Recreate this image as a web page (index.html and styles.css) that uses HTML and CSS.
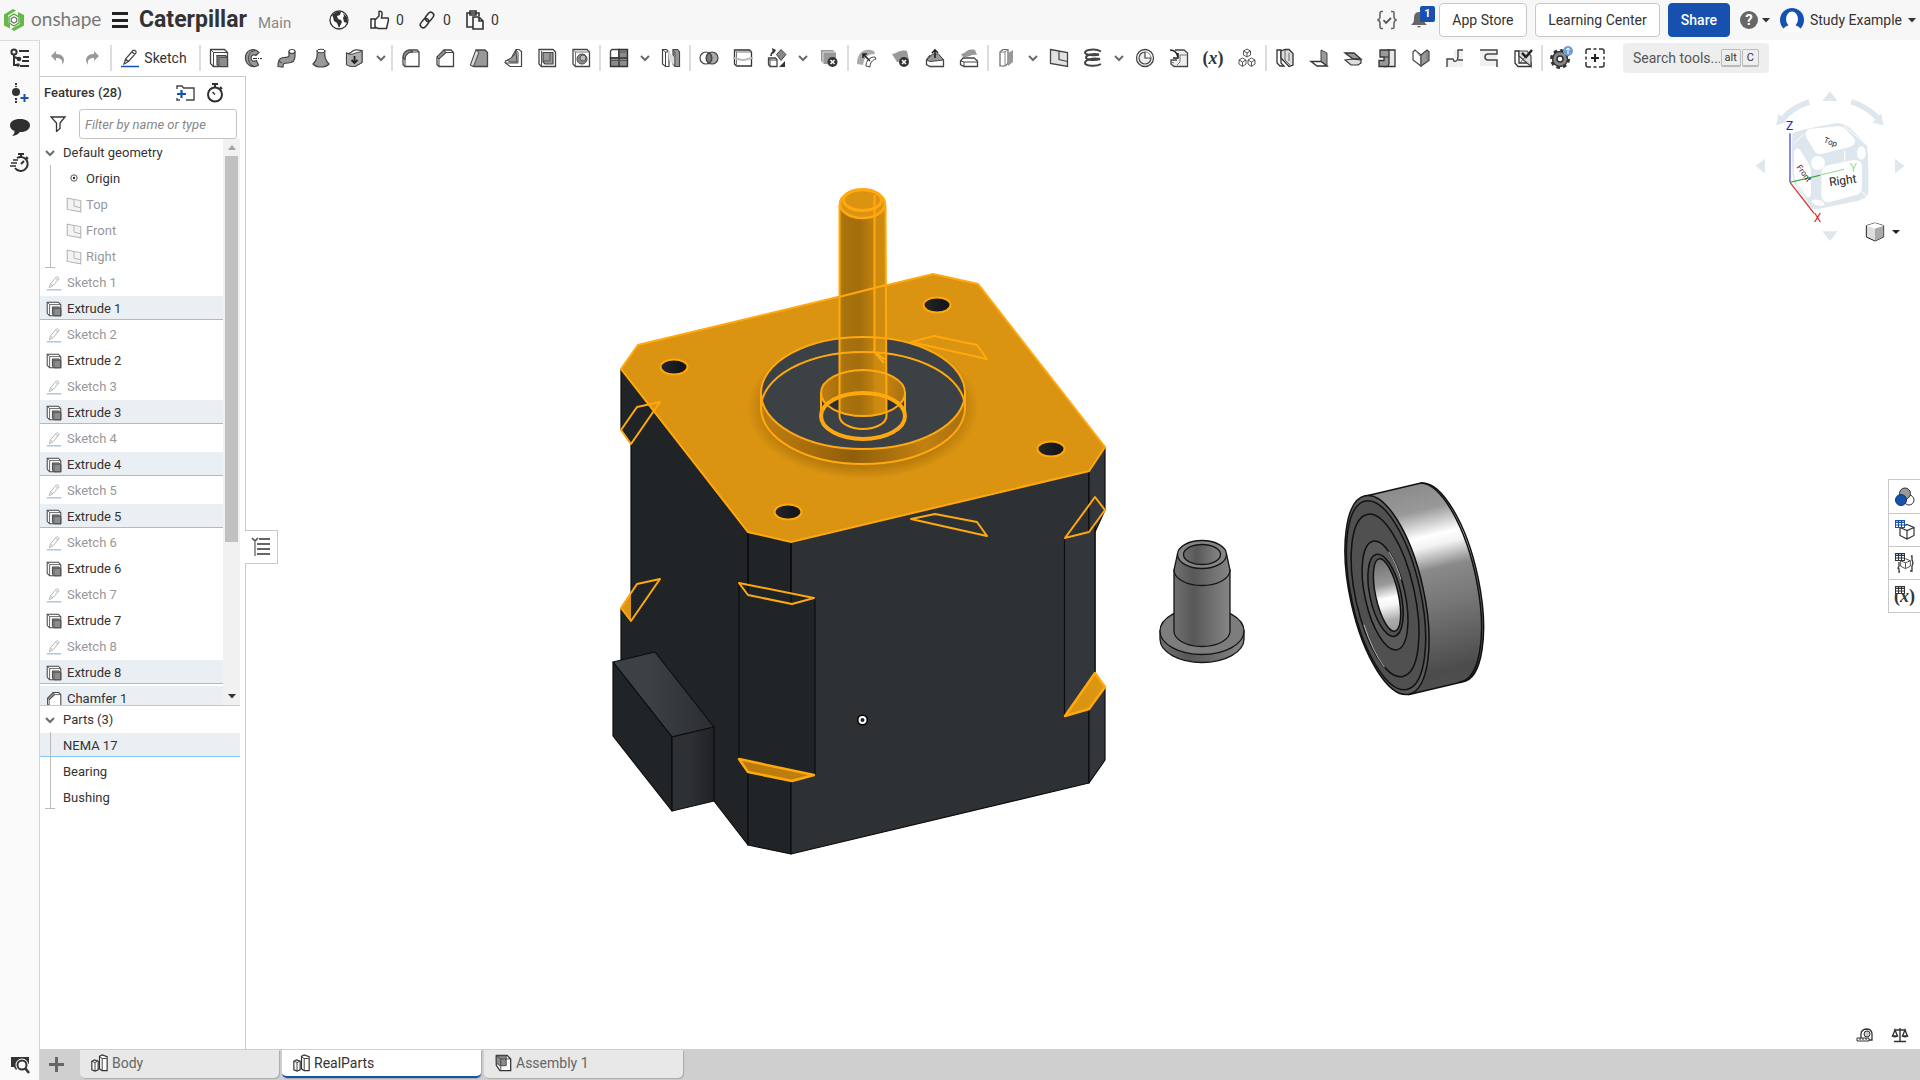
FILE: index.html
```html
<!DOCTYPE html>
<html lang="en">
<head>
<meta charset="utf-8">
<title>Caterpillar | RealParts</title>
<link rel="stylesheet" href="styles.css">
</head>
<body>
<svg class="defs" aria-hidden="true">
  <symbol id="i-chev" viewBox="0 0 10 10"><path d="M1 3l4 4 4-4" fill="none" stroke="#6b6b6b" stroke-width="2"/></symbol>
  <symbol id="i-caret" viewBox="0 0 8 5"><path d="M0 0h8L4 4.500z" fill="#333"/></symbol>
  <symbol id="i-undo" viewBox="0 0 20 20"><path d="M8 3L3 8l5 5v-3c5 0 7 2 6 7 4-5 2-11-6-11z" fill="#999"/></symbol>
  <symbol id="i-redo" viewBox="0 0 20 20"><path d="M12 3l5 5-5 5v-3c-5 0-7 2-6 7-4-5-2-11 6-11z" fill="#999"/></symbol>
  <symbol id="i-sketch" viewBox="0 0 20 20"><path d="M4 16l1.500-5L13 2.500c1-1 4 1 3 2.500L8.500 13.500zM5.500 11l3 2.500M12 4l3 2.500" fill="#fff" stroke="#444" stroke-width="1.200"/><path d="M1 18.500h18" stroke="#1651b0" stroke-width="1.500"/></symbol>
  <symbol id="i-extrude" viewBox="0 0 20 20"><path d="M1.500 1.500h14l3 3v14h-14l-3-3z" fill="#fff" stroke="#444" stroke-width="1.300"/><path d="M1.500 1.500l3 3h14M4.500 4.500v14" fill="none" stroke="#444"/><path d="M8 7.500h8.500l2 2v9H10l-2-2z" fill="#8c8c8c" stroke="#444" stroke-width="1.200"/><path d="M8 7.500l2 2h8.500M10 9.500v9" fill="none" stroke="#555"/></symbol>
  <symbol id="i-revolve" viewBox="0 0 20 20"><path d="M16 4.500C11-1 2 2 2.500 10.500 3 18 11 20.500 15.500 17l-2-4.500c-2.500 1.500-5.500.5-5.500-2.500s3-4 5-2.500z" fill="#999" stroke="#444" stroke-width="1.200"/><path d="M12 2.500C7 3 5.500 7 5.500 10.500s2 6.500 5.500 8" fill="none" stroke="#444"/><path d="M10 10.500h9" stroke="#333" stroke-width="1.200" stroke-dasharray="4 1 1 1"/></symbol>
  <symbol id="i-sweep" viewBox="0 0 20 20"><path d="M12 4v3.500c0 2-2 2-5 2-5 0-6 3.500-6 9l5 .5c0-4 1-4 5-4 5 0 7-3 7-7V4z" fill="#999" stroke="#444" stroke-width="1.200"/><ellipse cx="15" cy="3.500" rx="3" ry="2" fill="#fff" stroke="#444" stroke-width="1.200"/><path d="M2 13l3 2" stroke="#444"/></symbol>
  <symbol id="i-loft" viewBox="0 0 20 20"><path d="M6 3c1 5 0 9-4 13 4 4 12 4 16 0-4-4-5-8-4-13z" fill="#999" stroke="#444" stroke-width="1.200"/><ellipse cx="10" cy="3" rx="4" ry="1.800" fill="#fff" stroke="#444"/></symbol>
  <symbol id="i-thicken" viewBox="0 0 20 20"><path d="M1.500 5c3 1 4 0 7-2.500 3-1.500 5 0 8.500 0v12L10 18.500c-3 0-5 0-8.500-2z" fill="#fff" stroke="#444" stroke-width="1.200"/><path d="M1.500 5c3 2 6 1.500 9 0 3-1 5-.5 6.500-2.500v12L10 18.500c-4 0-6 0-8.500-2z" fill="#b0b0b0" stroke="#444"/><path d="M9.500 8v6M6.500 12l3 3 3-3" stroke="#222" stroke-width="1.800" fill="none"/></symbol>
  <symbol id="i-fillet" viewBox="0 0 20 20"><path d="M4 18.500l-2-2V10c0-5 3-8 8-8h6l2 2v14.500z" fill="#fff" stroke="#444" stroke-width="1.300"/><path d="M2 10c0-5 3-8 8-8l2 2c-5 0-8 3-8 8z" fill="#8c8c8c" stroke="#444"/><path d="M4 18V12c0-5 3-8 8-8h6" fill="none" stroke="#444"/></symbol>
  <symbol id="i-chamfer" viewBox="0 0 20 20"><path d="M4 18.500l-2-2V9l7-7h7l2.500 2.500v14z" fill="#fff" stroke="#444" stroke-width="1.300"/><path d="M2 9l7-7 2 2.500L4 11z" fill="#8c8c8c" stroke="#444"/><path d="M4 18.500V11l7-6.500h7.500" fill="none" stroke="#444"/></symbol>
  <symbol id="i-draft" viewBox="0 0 20 20"><path d="M1.500 17L7 2h9l2.500 2.500v14h-14z" fill="#999" stroke="#444" stroke-width="1.300"/><path d="M4.500 18.500L10 4.500 7 2" fill="none" stroke="#555"/><path d="M2 17L7 3l2 1.500-5 13z" fill="#ddd"/></symbol>
  <symbol id="i-rib" viewBox="0 0 20 20"><path d="M13 1.500h3l2.500 2v15H7l-5-4 1-2h4z" fill="#fff" stroke="#444" stroke-width="1.200"/><path d="M13 3c-1 4-4 7-9 9l3 2h7z" fill="#999" stroke="#444"/><path d="M13 2l2 2.500V15H3" fill="none" stroke="#444"/></symbol>
  <symbol id="i-shell" viewBox="0 0 20 20"><path d="M2 1.500h14l2.500 2.500v14.500h-14L2 16z" fill="#fff" stroke="#444" stroke-width="1.300"/><path d="M6 4.500h10V16H8l-2-2z" fill="#999" stroke="#444" stroke-width="1.200"/><path d="M13 5v8H6M4.500 3v15" fill="none" stroke="#555"/></symbol>
  <symbol id="i-hole" viewBox="0 0 20 20"><path d="M2 1.500h14l2.500 2.500v14.500h-14L2 16z" fill="#fff" stroke="#444" stroke-width="1.300"/><path d="M2 1.500L4.500 4h14M4.500 4v14" fill="none" stroke="#777"/><circle cx="11" cy="11" r="5" fill="#8c8c8c" stroke="#444"/><circle cx="12" cy="10" r="3" fill="#bbb" stroke="#555"/></symbol>
  <symbol id="i-pattern" viewBox="0 0 20 20"><path d="M1.500 3l1.500-1.500h7V10H1.500z" fill="#fff" stroke="#444" stroke-width="1.400"/><path d="M10 1.500h8.500v8.500H10zM1.500 10H10v8.500H1.500zM10 10h8.500v8.500H10z" fill="#8c8c8c" stroke="#333" stroke-width="1.400"/><path d="M1.500 12.500h8M10 12.500h8M10 4h8" stroke="#555"/></symbol>
  <symbol id="i-mirror" viewBox="0 0 20 20"><path d="M1.500 1.500h4L8 4v14.500H4.500L1.500 16z" fill="#fff" stroke="#444" stroke-width="1.200"/><path d="M4.500 18V4l-3-2.500M4.500 4H8" fill="none" stroke="#444"/><path d="M12 1.500h4.500L18.500 4v14.500H14L12 16z" fill="#999" stroke="#444" stroke-width="1.200"/><path d="M14 18V4l-2-2.500" fill="none" stroke="#555"/><path d="M7 2l6 7v8l-5-5z" fill="#ddd"/></symbol>
  <symbol id="i-boolean" viewBox="0 0 20 20"><circle cx="13" cy="10" r="6" fill="#aaa" stroke="#444" stroke-width="1.200"/><circle cx="7" cy="10" r="6" fill="none" stroke="#444" stroke-width="1.200"/><path d="M10 4.800c3 3 3 7.400 0 10.400-3-3-3-7.400 0-10.400z" fill="#808080" stroke="#444"/></symbol>
  <symbol id="i-split" viewBox="0 0 20 20"><path d="M1.500 2h15l2 2v14h-15l-2-2z" fill="#fff" stroke="#333" stroke-width="1.300"/><path d="M1.500 2l2 2h15M3.500 4v14" fill="none" stroke="#777"/><path d="M0 10c4 0 6 2 10 2s6-2 10-2" fill="none" stroke="#bbb" stroke-width="2"/></symbol>
  <symbol id="i-transform" viewBox="0 0 20 20"><path d="M1.500 10h7l1.500 1.500v7H3l-1.500-2z" fill="#fff" stroke="#444" stroke-width="1.300"/><path d="M1.500 10L3 12h7M3 12v6" fill="none" stroke="#444"/><path d="M14 1.500l5 5-5 6-4.500-6z" fill="#888" stroke="#444"/><path d="M4 8c0-3 1-4 4-5" fill="none" stroke="#333" stroke-width="1.600"/><path d="M5 0l4 2-3 4zM12 19l6-6v6z" fill="#333"/></symbol>
  <symbol id="i-delpart" viewBox="0 0 20 20"><path d="M2 2h12l3 3v11H5l-3-3z" fill="#999"/><path d="M4 16V4h12" fill="none" stroke="#ddd"/><circle cx="13.500" cy="14" r="5" fill="#333"/><path d="M11.500 12l4 4m0-4l-4 4" stroke="#fff" stroke-width="1.500"/></symbol>
  <symbol id="i-modfillet" viewBox="0 0 20 20"><path d="M0 16C0 5 7-1 17 3l1 3c-7 0-11 3-12 11z" fill="#aaa"/><path d="M9 18c0-5 3-9 9-9l1 2c-4 1-6 4-6 8z" fill="#fff" stroke="#444"/><path d="M6 6l7 7M6 10V6h4" fill="none" stroke="#222" stroke-width="1.500"/></symbol>
  <symbol id="i-delface" viewBox="0 0 20 20"><path d="M1 6c5 0 7-5 15-3l2 9c-5-2-8 2-12 2z" fill="#999"/><circle cx="13" cy="14" r="5" fill="#333"/><path d="M11 12l4 4m0-4l-4 4" stroke="#fff" stroke-width="1.500"/></symbol>
  <symbol id="i-moveface" viewBox="0 0 20 20"><path d="M1.500 12l3-4h10l4 4v6.500H5l-3.500-2z" fill="#fff" stroke="#444" stroke-width="1.300"/><path d="M1.500 12l6-6h6l5 6-13.500 1.500z" fill="#999" stroke="#444"/><path d="M10 10V2M7 5l3-3 3 3" fill="none" stroke="#222" stroke-width="1.600"/></symbol>
  <symbol id="i-replace" viewBox="0 0 20 20"><path d="M2 6c5 0 5-6 14-4l2 5c-6-1-9 3-14 2z" fill="#999"/><path d="M1.500 13l2.500-3h11l3.500 3v5.500H5l-3.500-2z" fill="#fff" stroke="#444" stroke-width="1.300"/><path d="M2 13l3 1h13M5 14v4" fill="none" stroke="#444"/></symbol>
  <symbol id="i-enclose" viewBox="0 0 20 20"><path d="M3 4l3-2.500h5v14L8 18H3z" fill="#fff" stroke="#666" stroke-width="1.200"/><path d="M3 4h5v14M8 4l3-2.500" fill="none" stroke="#888"/><path d="M11 5l5-3v12l-5 4z" fill="#999"/></symbol>
  <symbol id="i-plane" viewBox="0 0 20 20"><path d="M1.500 1.500l17 3v14l-17-3z" fill="#e2e2e2" stroke="#444" stroke-width="1.300"/><path d="M10 3v8.500l8.500 2" fill="none" stroke="#444" stroke-width="1.200"/></symbol>
  <symbol id="i-helix" viewBox="0 0 20 20"><g fill="none" stroke="#444" stroke-width="2"><path d="M18 3.500C12 0 2 2 2 4.500S12 8 16 6.500"/><path d="M16 6.500C10 5 3 7 3 9.500s9 3.500 14 1.500"/><path d="M17 11C10 9.500 2 12 2 15s11 4 16 1"/></g></symbol>
  <symbol id="i-offset" viewBox="0 0 20 20"><circle cx="10" cy="10" r="8.500" fill="#fff" stroke="#444" stroke-width="1.300"/><path d="M10 4v6h6a6 6 0 1 1-6-6z" fill="#eee" stroke="#444" stroke-width="1.200"/><path d="M10 4a6 6 0 0 1 6 6" fill="none" stroke="#888"/></symbol>
  <symbol id="i-import" viewBox="0 0 20 20"><path d="M6 2h9l3.500 3v13.500H5L2 16v-4h6" fill="#eee" stroke="#444" stroke-width="1.300"/><path d="M8 17l3-3V7h7M2 14l3 1" fill="none" stroke="#777"/><path d="M1 2c4 0 7 3 8 7M9 5v5H4" fill="none" stroke="#222" stroke-width="1.600"/></symbol>
  <symbol id="i-cubes" viewBox="0 0 20 20"><g fill="#fff" stroke="#555"><path d="M10 1l3.500 2v4L10 9 6.500 7V3z"/><path d="M6.500 3l3.500 2 3.500-2M10 5v4"/><path d="M5.500 10L9 12v4l-3.500 2.500L2 16v-4zM2 12l3.500 2L9 12M5.500 14v4"/><path d="M14.500 10l3.500 2v4l-3.500 2.500L11 16v-4zM11 12l3.500 2 3.500-2M14.500 14v4"/></g></symbol>
  <symbol id="i-sm1" viewBox="0 0 20 20"><path d="M2 2h4v13l3 3H5l-3-3z" fill="#fff" stroke="#333" stroke-width="1.300"/><path d="M6 3l4-1.500h4l4 4V17l-4 1.500L6 10z" fill="#ddd" stroke="#333" stroke-width="1.300"/><path d="M10 2v10l6 6M14 5v8" fill="none" stroke="#666"/></symbol>
  <symbol id="i-sm2" viewBox="0 0 20 20"><path d="M12 2l6 3v13l-6-4.500z" fill="#999" stroke="#444"/><path d="M12 13.500H2l6 4.500h10z" fill="#fff" stroke="#333" stroke-width="1.300"/></symbol>
  <symbol id="i-sm3" viewBox="0 0 20 20"><path d="M2 5h9l7 6h-8z" fill="#999" stroke="#333" stroke-width="1.300"/><path d="M2 12l7-1 9 1v3l-3 2H8z" fill="#ddd" stroke="#333" stroke-width="1.200"/></symbol>
  <symbol id="i-sm4" viewBox="0 0 20 20"><path d="M11 2h7v16.500H7l4-2z" fill="#e8e8e8" stroke="#333" stroke-width="1.300"/><path d="M3 2h9v13q0 3.500-3.500 3.500H2v-6h5V9H3z" fill="#999" stroke="#333" stroke-width="1.300"/><path d="M7 9h5" stroke="#333"/></symbol>
  <symbol id="i-sm5" viewBox="0 0 20 20"><path d="M2 4l2-2 6 5v11l-8-6z" fill="#fff" stroke="#444" stroke-width="1.200"/><path d="M10 7l6-5 2 1.500v9L10 18z" fill="#999" stroke="#444" stroke-width="1.200"/><path d="M5 3l5 6v9M16 3v9" fill="none" stroke="#777"/></symbol>
  <symbol id="i-sm6" viewBox="0 0 20 20"><path d="M9 2h9v9H9zM2 12h16v7H2z" fill="#f0f0f0"/><path d="M18 2h-5v6c0 3-1 6-4 5l-1-2H2v8M13 12h5" fill="none" stroke="#444" stroke-width="1.400"/></symbol>
  <symbol id="i-sm7" viewBox="0 0 20 20"><path d="M1 2h17v16H1z" fill="#f0f0f0"/><path d="M1 2h17v4H9c-4 0-4 6 0 6h9v7" fill="none" stroke="#444" stroke-width="1.500"/></symbol>
  <symbol id="i-sm8" viewBox="0 0 20 20"><path d="M2 3h4v12h12v3.500H5L2 15z" fill="#fff" stroke="#333" stroke-width="1.300"/><path d="M6 3h8l4 5v10.500L6 8z" fill="#ddd" stroke="#444" stroke-width="1.200"/><path d="M6 16l7-8" fill="none" stroke="#555"/><path d="M9 5l4 4 6-7" fill="none" stroke="#222" stroke-width="2.500"/></symbol>
  <symbol id="i-gear" viewBox="0 0 24 24"><circle cx="11" cy="13" r="8.500" fill="none" stroke="#333" stroke-width="3" stroke-dasharray="3.500 3.170"/><circle cx="11" cy="13" r="7.500" fill="#888" stroke="#333" stroke-width="1.500"/><circle cx="11" cy="13" r="3" fill="#fff" stroke="#333" stroke-width="1.500"/><circle cx="19" cy="5" r="5" fill="#6f9fd6"/><path d="M19 2v6M17 4l2-2 2 2" stroke="#fff" fill="none"/></symbol>
  <symbol id="i-add" viewBox="0 0 20 20"><path d="M1 6V3q0-2 2-2h3M14 1h3q2 0 2 2v3M19 14v3q0 2-2 2h-3M6 19H3q-2 0-2-2v-3M8.500 1h3M8.500 19h3M1 8.500v3M19 8.500v3" fill="none" stroke="#333" stroke-width="1.500"/><path d="M10 6v8M6 10h8" stroke="#222" stroke-width="2"/></symbol>
  <symbol id="i-tree" viewBox="0 0 20 20"><g fill="none" stroke="#333" stroke-width="2"><circle cx="4" cy="4" r="2.600"/><path d="M4 7v10h4M4 9l6 2M9 3h10M13 9h6M12 13h7M10 18h9"/></g><circle cx="9" cy="11" r="2.300" fill="#333"/><circle cx="8" cy="17" r="1.800" fill="#333"/></symbol>
  <symbol id="i-dot" viewBox="0 0 20 20"><path d="M6 0v4M6 15v5" stroke="#333" stroke-width="2" stroke-dasharray="2 1"/><circle cx="6" cy="9" r="4" fill="#333"/><path d="M14.500 11v8M10.500 15h8" stroke="#1651b0" stroke-width="2"/></symbol>
  <symbol id="i-comment" viewBox="0 0 20 20"><path d="M10 1c6 0 10 2.500 10 6.500s-5 7-10 6.500c-2 2.500-4 3.500-8 4 2-1.500 2.500-3 2.500-5C1.500 12 0 10 0 7.500 0 3.500 4 1 10 1z" fill="#2f2f2f"/></symbol>
  <symbol id="i-watch" viewBox="0 0 20 20"><circle cx="10" cy="11.500" r="7" fill="none" stroke="#2f2f2f" stroke-width="2"/><path d="M7 1h6M10 1v3M15 4l2 2" stroke="#2f2f2f" stroke-width="2"/><path d="M10 11.500L7.500 9" stroke="#2f2f2f" stroke-width="1.500"/></symbol>
  <symbol id="i-fast" viewBox="0 0 20 20"><path d="M7 5a7 7 0 1 1-2 10" fill="none" stroke="#2f2f2f" stroke-width="2"/><path d="M8 1h6M11 1v3M16 4l2 2M11 11l3-3" stroke="#2f2f2f" stroke-width="2"/><path d="M3 7h5M1 10h6M0 13h6" stroke="#2f2f2f" stroke-width="1.500"/></symbol>
  <symbol id="i-find" viewBox="0 0 20 20"><path d="M1 3h18v7H12L6 16l-2-3H1z" fill="#333"/><circle cx="12" cy="11" r="5" fill="#fafafa" stroke="#fafafa" stroke-width="3"/><circle cx="12" cy="11" r="4.500" fill="#fff" stroke="#333" stroke-width="2"/><path d="M15 14l4 5" stroke="#333" stroke-width="2.500"/></symbol>
  <symbol id="i-studio" viewBox="0 0 20 20"><path d="M1.500 8l3-1.500 4 1.500v9.500L5 19l-3.500-1.500z" fill="#fff" stroke="#333" stroke-width="1.300"/><path d="M1.500 8L5 9.500 8 8M5 9.500V19" fill="none" stroke="#333"/><path d="M10 2.500l3-1.500 5.500 2v15.500H13l-3-2z" fill="#fff" stroke="#333" stroke-width="1.300"/><path d="M10 3l3 2h5M13 5v13" fill="none" stroke="#333"/></symbol>
  <symbol id="i-asm" viewBox="0 0 20 20"><path d="M2 1.500h12l4 4v13H6l-4-6z" fill="#fff" stroke="#333" stroke-width="1.400"/><path d="M2 2h11v11H6l-4-3z" fill="#8c8c8c" stroke="#444"/><path d="M2 2l5 3.500h11M7 5.500v13" fill="none" stroke="#444"/></symbol>
  <symbol id="i-grid" viewBox="0 0 10 8"><path d="M0 0h10v8H0z" fill="currentColor"/><path d="M1 3h2v1.500H1zM4 3h2v1.500H4zM7 3h2v1.500H7zM1 5.500h2V7H1zM4 5.500h2V7H4zM7 5.500h2V7H7z" fill="#fff"/><path d="M1 1h2v1H1zM4 1h2v1H4zM7 1h2v1H7z" fill="#9ab9e2"/></symbol>
  <symbol id="i-cube" viewBox="0 0 16 16"><path d="M8 1l7 3v8l-7 3.500L1 12V4zM1 4l7 3 7-3M8 7v8" fill="#fff" stroke="#333" stroke-width="1.200"/></symbol>
</svg>

<header class="top">
  <a class="brand" href="#"><svg width="20" height="22" viewBox="0 0 20 22"><path d="M9 0l3 1.500-8 5V14l2 1.500v4L0 16.500V5.500zM14 3l6 3v10.500L10 22l-3-2 9-5V8l-2-1z" fill="#63bb46"/><path d="M10 5l5 3v6l-5 3-5-3V8z" fill="none" stroke="#54a33c" stroke-width="1.300"/><path d="M10 8l2.700 1.500v3L10 14l-2.700-1.500v-3z" fill="#fff" stroke="#777" stroke-width="1.300"/></svg><span>onshape</span></a>
  <button class="burger" aria-label="Menu"><i></i><i></i><i></i></button>
  <h1>Caterpillar</h1><span class="branch">Main</span>
  <svg class="globe" viewBox="0 0 20 20"><circle cx="10" cy="10" r="9" fill="#fff" stroke="#333" stroke-width="1.300"/><path d="M3 5c3-3 6-4 9-3l-1 3-3 1 1 3 3 1 1 2-3 6-2-5-3-2-1-4zM14 3l4 4 0 6-3-1-1-4 1-2z" fill="#333"/></svg>
  <button class="stat s1"><svg viewBox="0 0 20 20"><path d="M1 9h4v9H1zM5 10l4-4V1.500c2-1 3.500.5 3 3L11.500 8H18l.5 2-2 8.500H8L5 17" fill="#fff" stroke="#333" stroke-width="1.500"/></svg>0</button>
  <button class="stat s2"><svg viewBox="0 0 20 20"><g fill="none" stroke="#333" stroke-width="1.500" transform="rotate(-52 10 10)"><rect x="1" y="7" width="10" height="6" rx="3"/><rect x="9" y="7" width="10" height="6" rx="3"/></g></svg>0</button>
  <button class="stat s3"><svg viewBox="0 0 20 20"><path d="M8 17H2V3h12v3M5 1h6v4H5zM8 7h6l4 4v8H8zM14 7v4h4" fill="none" stroke="#333" stroke-width="1.600"/></svg>0</button>
  <div class="right">
    <button class="ico" aria-label="Custom features"><svg width="20" height="20" viewBox="0 0 20 20"><path d="M6 1.500H4.500Q3 1.500 3 3v4q0 2-2 3 2 1 2 3v4q0 1.500 1.500 1.500H6M14 1.500h1.500Q17 1.500 17 3v4q0 2 2 3-2 1-2 3v4q0 1.500-1.500 1.500H14" fill="none" stroke="#666" stroke-width="1.600"/><path d="M6.500 10l2.500 3 5-5" fill="none" stroke="#555" stroke-width="1.800"/></svg></button>
    <button class="ico bell" aria-label="Notifications"><svg width="18" height="18" viewBox="0 0 18 18"><path d="M9 1c4 0 5 3 5 7 0 3 1 4 3 6H1c2-2 3-3 3-6 0-4 1-7 5-7zM7 15h4q-2 3-4 0z" fill="#666"/></svg><b>1</b></button>
    <button class="btn w1">App Store</button>
    <button class="btn w2">Learning Center</button>
    <button class="btn share">Share</button>
    <button class="help" aria-label="Help"><b>?</b><svg class="caret"><use href="#i-caret"/></svg></button>
    <button class="user"><svg width="24" height="24" viewBox="0 0 24 24"><circle cx="12" cy="12" r="12" fill="#1651b0"/><ellipse cx="12" cy="11" rx="6" ry="7.500" fill="#fff"/><path d="M2 24q1-5 7-7V15h6v2q6 2 7 7z" fill="#fff"/></svg>Study Example<svg class="caret"><use href="#i-caret"/></svg></button>
  </div>
</header>

<main class="body">
  <nav class="rail">
    <button aria-label="Versions"><svg><use href="#i-tree"/></svg></button>
    <button aria-label="Insert version"><svg><use href="#i-dot"/></svg></button>
    <button aria-label="Comments"><svg><use href="#i-comment"/></svg></button>
    <button aria-label="Performance"><svg><use href="#i-fast"/></svg></button>
    <button class="last" aria-label="Tab manager"><svg><use href="#i-find"/></svg></button>
  </nav>
  <div class="main">
    <div class="toolbar">
      <button class="tool" aria-label="Undo"><svg><use href="#i-undo"/></svg></button><button class="tool" aria-label="Redo"><svg><use href="#i-redo"/></svg></button><i class="sep"></i>
      <button class="sk"><svg><use href="#i-sketch"/></svg>Sketch</button><i class="sep"></i>
      <button class="tool" aria-label="Extrude"><svg><use href="#i-extrude"/></svg></button><button class="tool" aria-label="Revolve"><svg><use href="#i-revolve"/></svg></button><button class="tool" aria-label="Sweep"><svg><use href="#i-sweep"/></svg></button><button class="tool" aria-label="Loft"><svg><use href="#i-loft"/></svg></button><button class="tool" aria-label="Thicken"><svg><use href="#i-thicken"/></svg></button><button class="more" aria-label="More"><svg><use href="#i-chev"/></svg></button><i class="sep"></i>
      <button class="tool" aria-label="Fillet"><svg><use href="#i-fillet"/></svg></button><button class="tool" aria-label="Chamfer"><svg><use href="#i-chamfer"/></svg></button><button class="tool" aria-label="Draft"><svg><use href="#i-draft"/></svg></button><button class="tool" aria-label="Rib"><svg><use href="#i-rib"/></svg></button><button class="tool" aria-label="Shell"><svg><use href="#i-shell"/></svg></button><button class="tool" aria-label="Hole"><svg><use href="#i-hole"/></svg></button><i class="sep"></i>
      <button class="tool" aria-label="Pattern"><svg><use href="#i-pattern"/></svg></button><button class="more" aria-label="More"><svg><use href="#i-chev"/></svg></button><button class="tool" aria-label="Mirror"><svg><use href="#i-mirror"/></svg></button><i class="sep"></i>
      <button class="tool" aria-label="Boolean"><svg><use href="#i-boolean"/></svg></button><button class="tool" aria-label="Split"><svg><use href="#i-split"/></svg></button><button class="tool" aria-label="Transform"><svg><use href="#i-transform"/></svg></button><button class="more" aria-label="More"><svg><use href="#i-chev"/></svg></button><button class="tool" aria-label="Delete part"><svg><use href="#i-delpart"/></svg></button><i class="sep"></i>
      <button class="tool" aria-label="Modify fillet"><svg><use href="#i-modfillet"/></svg></button><button class="tool" aria-label="Delete face"><svg><use href="#i-delface"/></svg></button><button class="tool" aria-label="Move face"><svg><use href="#i-moveface"/></svg></button><button class="tool" aria-label="Replace face"><svg><use href="#i-replace"/></svg></button><i class="sep"></i>
      <button class="tool" aria-label="Offset surface"><svg><use href="#i-enclose"/></svg></button><button class="more" aria-label="More"><svg><use href="#i-chev"/></svg></button><button class="tool" aria-label="Plane"><svg><use href="#i-plane"/></svg></button><button class="tool" aria-label="Helix"><svg><use href="#i-helix"/></svg></button><button class="more" aria-label="More"><svg><use href="#i-chev"/></svg></button><button class="tool" aria-label="Mate connector"><svg><use href="#i-offset"/></svg></button><button class="tool" aria-label="Derived"><svg><use href="#i-import"/></svg></button><button class="tool fx" aria-label="Variable">(<i>x</i>)</button><button class="tool" aria-label="Composite part"><svg><use href="#i-cubes"/></svg></button><i class="sep"></i>
      <button class="tool" aria-label="Sheet metal"><svg><use href="#i-sm1"/></svg></button><button class="tool" aria-label="Flange"><svg><use href="#i-sm2"/></svg></button><button class="tool" aria-label="Hem"><svg><use href="#i-sm3"/></svg></button><button class="tool" aria-label="Tab"><svg><use href="#i-sm4"/></svg></button><button class="tool" aria-label="Make joint"><svg><use href="#i-sm5"/></svg></button><button class="tool" aria-label="Corner"><svg><use href="#i-sm6"/></svg></button><button class="tool" aria-label="Bend relief"><svg><use href="#i-sm7"/></svg></button><button class="tool" aria-label="Finish sheet metal"><svg><use href="#i-sm8"/></svg></button><i class="sep"></i>
      <button class="tool gear" aria-label="Add custom features"><svg><use href="#i-gear"/></svg></button><button class="tool" aria-label="Add feature"><svg><use href="#i-add"/></svg></button>
      <label class="search"><input type="text" aria-label="Search tools" placeholder="Search tools..."><kbd>alt</kbd><kbd>C</kbd></label>
    </div>

    <div class="work">
      <aside class="panel">
        <div class="phead"><h2>Features (28)</h2>
          <button aria-label="Add folder"><svg viewBox="0 0 20 20"><path d="M2 6V3h5l1.500 2H19v12h-8" fill="none" stroke="#444" stroke-width="1.400"/><path d="M2 15v2h3" fill="none" stroke="#444" stroke-width="1.400"/><path d="M6.500 7v8M2 11h9" stroke="#1651b0" stroke-width="2.200"/></svg></button>
          <button aria-label="Rebuild times"><svg><use href="#i-watch"/></svg></button></div>
        <div class="filter"><svg width="16" height="16" viewBox="0 0 16 16"><path d="M1 1h14l-5 6v5.500L6.500 15.500V7z" fill="#fff" stroke="#333" stroke-width="1.300"/></svg><input type="text" aria-label="Filter" placeholder="Filter by name or type"></div>
        <div class="listwrap">
          <ul class="list">
            <li class="head"><svg class="c"><use href="#i-chev"/></svg>Default geometry</li>
            <li class="group"><ul>
              <li class="kid"><svg viewBox="0 0 16 16"><circle cx="8" cy="7" r="3.200" fill="none" stroke="#555"/><circle cx="8" cy="7" r="1.200" fill="#333"/></svg>Origin</li>
              <li class="kid off"><svg><use href="#i-plane"/></svg>Top</li>
              <li class="kid off"><svg><use href="#i-plane"/></svg>Front</li>
              <li class="kid off"><svg><use href="#i-plane"/></svg>Right</li></ul></li>
            <li class="off"><svg><use href="#i-sketch"/></svg>Sketch 1</li>
            <li class="sel"><svg><use href="#i-extrude"/></svg>Extrude 1</li>
            <li class="off"><svg><use href="#i-sketch"/></svg>Sketch 2</li>
            <li><svg><use href="#i-extrude"/></svg>Extrude 2</li>
            <li class="off"><svg><use href="#i-sketch"/></svg>Sketch 3</li>
            <li class="sel"><svg><use href="#i-extrude"/></svg>Extrude 3</li>
            <li class="off"><svg><use href="#i-sketch"/></svg>Sketch 4</li>
            <li class="sel"><svg><use href="#i-extrude"/></svg>Extrude 4</li>
            <li class="off"><svg><use href="#i-sketch"/></svg>Sketch 5</li>
            <li class="sel"><svg><use href="#i-extrude"/></svg>Extrude 5</li>
            <li class="off"><svg><use href="#i-sketch"/></svg>Sketch 6</li>
            <li><svg><use href="#i-extrude"/></svg>Extrude 6</li>
            <li class="off"><svg><use href="#i-sketch"/></svg>Sketch 7</li>
            <li><svg><use href="#i-extrude"/></svg>Extrude 7</li>
            <li class="off"><svg><use href="#i-sketch"/></svg>Sketch 8</li>
            <li class="sel"><svg><use href="#i-extrude"/></svg>Extrude 8</li>
            <li class="sel"><svg><use href="#i-chamfer"/></svg>Chamfer 1</li>
          </ul>
          <div class="scroll"><svg viewBox="0 0 8 5"><path d="M0 5h8L4 0z" fill="#a3a3a3"/></svg><i></i><svg class="dn"><use href="#i-caret"/></svg></div>
        </div>
        <ul class="list parts">
          <li class="head"><svg class="c"><use href="#i-chev"/></svg>Parts (3)</li>
          <li class="group"><ul><li class="sel">NEMA 17</li><li>Bearing</li><li>Bushing</li></ul></li>
        </ul>
      </aside>

      <section class="canvas">
        <svg class="scene" viewBox="246 76 1674 973" role="img" aria-label="Model view">
          <defs>
            <linearGradient id="shaft"><stop offset="0" stop-color="#bd7d10"/><stop offset=".12" stop-color="#a8720d"/><stop offset=".45" stop-color="#a36f0c"/><stop offset=".72" stop-color="#bf800f"/><stop offset=".76" stop-color="#cb890f"/><stop offset="1" stop-color="#d08c10"/></linearGradient>
            <linearGradient id="wall"><stop offset="0" stop-color="#c07e10"/><stop offset=".45" stop-color="#905e0a"/><stop offset=".8" stop-color="#c28110"/><stop offset="1" stop-color="#a97010"/></linearGradient>
            <linearGradient id="boxtop" x1="0" y1="0" x2="1" y2="0"><stop offset=".35" stop-color="#3c4145"/><stop offset="1" stop-color="#2b2e31"/></linearGradient>
            <linearGradient id="boxside"><stop offset=".4" stop-color="#2e3134"/><stop offset="1" stop-color="#202225"/></linearGradient>
            <linearGradient id="gold"><stop offset="0" stop-color="#b87a0d"/><stop offset="1" stop-color="#dd9612"/></linearGradient>
            <linearGradient id="hole"><stop offset="0" stop-color="#25282b"/><stop offset=".7" stop-color="#15171a"/></linearGradient>
            <linearGradient id="tube"><stop offset="0" stop-color="#707070"/><stop offset=".35" stop-color="#585858"/><stop offset="1" stop-color="#868686"/></linearGradient>
            <linearGradient id="steel" gradientUnits="userSpaceOnUse" x1="1395" y1="491" x2="1444" y2="692"><stop offset="0" stop-color="#8c8c8c"/><stop offset=".12" stop-color="#999"/><stop offset=".25" stop-color="#fff"/><stop offset=".3" stop-color="#f2f2f2"/><stop offset=".41" stop-color="#8a8a8a"/><stop offset=".6" stop-color="#747474"/><stop offset=".9" stop-color="#4c4c4c"/><stop offset="1" stop-color="#505050"/></linearGradient>
            <linearGradient id="bore" x1="0" y1="0" x2="0" y2="1"><stop offset="0" stop-color="#6e6e6e"/><stop offset=".35" stop-color="#999"/><stop offset=".55" stop-color="#fff"/><stop offset=".65" stop-color="#f4f4f4"/><stop offset=".85" stop-color="#aaa"/><stop offset="1" stop-color="#999"/></linearGradient>
            <radialGradient id="shade"><stop offset=".84" stop-color="#7a4d00" stop-opacity=".35"/><stop offset="1" stop-color="#7a4d00" stop-opacity="0"/></radialGradient>
            <clipPath id="rim"><ellipse cx="863" cy="393" rx="42" ry="23"/></clipPath>
            <clipPath id="shaftclip"><path d="M839 205a23.500 13 0 0 1 47 0V393h19a42 23 0 0 1-84 0h18z"/></clipPath>
          </defs>
          <g stroke="#0c0d0e" stroke-width="1.200" stroke-linejoin="round">
            <path d="M621 369V430L631 444V593L621 608V670L714 801 748 845V532z" fill="#212427"/>
            <path d="M748 532V845L791 854V542z" fill="#212427"/>
            <path d="M791 542V854L1089 783V471z" fill="#2e3134"/>
            <path d="M1089 471V783L1105 760V687L1095 673V532L1105 510V447z" fill="#33363b"/>
            <path d="M739 583L815 598V775L739 759z" fill="#212427"/>
            <path d="M1064.500 539L1089 532 1095 524V673L1064.500 716z" fill="#33363b"/>
            <path d="M613 662L655 652 714 727 672 737z" fill="url(#boxtop)"/>
            <path d="M613 662L672 737V811L613 736z" fill="#212427"/>
            <path d="M672 737L714 727V801L672 811z" fill="url(#boxside)"/>
          </g>
          <path d="M791 542V604M748 532V595" stroke="#0c0d0e" stroke-width="1.200"/>
          <path d="M933 274L978 284 1105 447 1089 471 791 542 748 532 621 369 638 345z" fill="#da9411" stroke="#ffa90f" stroke-width="2"/>
          <ellipse cx="863" cy="408" rx="116" ry="71" fill="url(#shade)"/>
          <g fill="url(#hole)" stroke="#ffa90f" stroke-width="2"><ellipse cx="937" cy="305" rx="13.500" ry="7.500"/><ellipse cx="674" cy="367" rx="13.500" ry="7.500"/><ellipse cx="1051" cy="449" rx="13.500" ry="7.500"/><ellipse cx="788" cy="512" rx="13.500" ry="7.500"/></g>
          <path d="M761 393V408a102 56 0 0 0 204 0V393z" fill="url(#wall)"/>
          <ellipse cx="863" cy="393" rx="102" ry="56" fill="#3c4145"/>
          <ellipse cx="863" cy="393" rx="42" ry="23" fill="url(#wall)"/>
          <ellipse cx="863" cy="416" rx="42" ry="23" fill="#2b2f33" clip-path="url(#rim)"/>
          <path d="M839 205V416H886V205z" fill="url(#shaft)" clip-path="url(#shaftclip)"/>
          <ellipse cx="862.500" cy="203" rx="23" ry="14" fill="#da9411"/>
          <g fill="none" stroke="#ffa90f" stroke-width="2" stroke-linejoin="round">
            <ellipse cx="863" cy="393" rx="102" ry="56"/><ellipse cx="863" cy="408" rx="102" ry="56"/><path d="M761 393v15M965 393v15"/>
            <ellipse cx="863" cy="393" rx="42" ry="23"/><ellipse cx="863" cy="416" rx="42" ry="23" stroke-width="4"/><path d="M821 393v23M905 393v23"/>
            <path d="M839.500 205V416a23.500 13 0 0 0 47 0L885.500 205M874.500 195V352L884 363M874.500 352L886 360M839 297L886 285"/>
            <ellipse cx="862.500" cy="200" rx="19" ry="10.500" stroke-width="3"/><ellipse cx="862.500" cy="204" rx="22.500" ry="14" stroke-width="2.500"/>
            <path d="M621 430L637 407 660 402 631 444zM911 519L935 514 977 522 987 536zM911 342L934 336 977 345 987 359zM1095 497L1105 510 1089 532 1065 538zM739 583L814 598 792 604 748 595z"/>
            <path d="M621 608L631 593V621z" fill="#da9411" stroke="none"/><path d="M621 608L637 584 660 579 631 621z"/>
            <path d="M1095 673L1105 687 1089 709 1065 716zM739 759L814 775 792 781 748 772z" fill="url(#gold)" stroke-width="2.500"/>
          </g>
          <circle cx="862.500" cy="720" r="3.500" fill="#222" stroke="#000" stroke-width="4"/><circle cx="862.500" cy="720" r="3" fill="#222" stroke="#fff" stroke-width="2"/>
          <g stroke="#151515" stroke-width="1.300">
            <path d="M1160 631v8a42 23.500 0 0 0 84 0v-8z" fill="url(#tube)"/><ellipse cx="1202" cy="631" rx="42" ry="23.500" fill="#7d7d7d"/>
            <path d="M1174 570V631a28 15.500 0 0 0 56 0V570z" fill="url(#tube)"/><path d="M1177.500 554L1174 570a28 15.500 0 0 0 56 0L1226.500 554z" fill="url(#tube)"/>
            <ellipse cx="1202" cy="554.500" rx="24.500" ry="14" fill="#858585"/><ellipse cx="1202" cy="554.500" rx="18.500" ry="10" fill="url(#tube)"/>
          </g>
          <g stroke="#111" stroke-width="1.500">
            <path d="M1368 495.500L1421 483A36.700 101.600 -12.500 0 1 1462 682L1409 694.500z" fill="url(#steel)"/>
            <path d="M1421 483A36.700 101.600 -12.500 0 1 1459 682" fill="none"/>
            <g transform="translate(1387 595) rotate(-12.500)"><ellipse rx="36.700" ry="101.600" fill="#5a5a5a"/><ellipse cx="-1" rx="34.500" ry="96.500" fill="#505050"/><ellipse cx="-2" rx="29.500" ry="83" fill="#505050"/><ellipse cx="-2" rx="20" ry="55.600" fill="#5a5a5a"/><ellipse cx="-1.500" rx="15.500" ry="42" fill="#505050"/><ellipse rx="11.300" ry="37" fill="url(#bore)"/><path d="M-29 24A29.500 83 0 0 0-18 70M11-42A20 55.600 0 0 1 17-12" fill="none" stroke="#ccc" stroke-width=".8"/></g>
          </g>
        </svg>

        <button class="toggle" aria-label="Toggle feature list"><svg width="20" height="20" viewBox="0 0 20 20"><path d="M1 1l3 3 3-3" fill="none" stroke="#444" stroke-width="1.500"/><path d="M4 5v14" stroke="#999" stroke-width="2"/><path d="M8 2h11M6 7h13M6 12h13M6 17h13" stroke="#333" stroke-width="1.400"/></svg></button>

        <svg class="viewcube" viewBox="0 0 600 510" role="img" aria-label="View cube">
          <g fill="#dfe7ee"><path d="M330 34l23 29h-46zM330 483l23-29h-46zM106 258l29-22v44zM554 258l-29-22v44zM168 136l8-35 24 26zM491 136l-8-36-25 28z"/></g>
          <path d="M268 66Q215 82 188 118M394 65Q445 82 475 116" fill="none" stroke="#dfe7ee" stroke-width="17"/>
          <path d="M217 160Q235 150 350 129Q375 130 390 144L440 195Q446 210 445 340Q435 358 415 362L290 388Q270 386 262 375L222 310Q214 290 217 160z" fill="#dfe7ee"/>
          <g fill="#fff"><path d="M268 147L350 139Q370 138 382 152L402 175Q412 193 390 200L305 222Q290 224 283 212L260 175Q250 155 268 147z"/><path d="M325 256L400 240Q425 238 426 260V320Q426 340 408 345L330 366Q305 370 304 345V280Q306 260 325 256z"/><path d="M222 215Q230 198 240 210L265 250Q273 262 273 280V340Q270 360 258 348L228 305Q222 295 222 280z"/><circle cx="294" cy="249" r="21"/><ellipse cx="424" cy="219" rx="13" ry="20"/><ellipse cx="294" cy="368" rx="20" ry="8" transform="rotate(15 294 368)"/></g>
          <path d="M374 212V248M372 137L440 195M222 190l28-26M228 310l36 60M426 335l14 14" stroke="#fff" stroke-width="3"/>
          <path d="M210 307V160" stroke="#5048e8" stroke-width="4"/><path d="M210 307L282 400" stroke="#e03434" stroke-width="4"/><path d="M210 307L372 268" stroke="#90d890" stroke-width="3"/><path d="M210 307L300 286" stroke="#30a030" stroke-width="3"/>
          <g class="vt"><text x="198" y="149" fill="#2222dd">Z</text><text x="281" y="427" fill="#e02020">X</text><text x="389" y="275" fill="#9ce09c">Y</text><text x="329" y="319" transform="rotate(-8 329 319)" class="dk">Right</text><text x="229" y="262" transform="rotate(54 229 262)" class="dk sm">Front</text><text x="310" y="186" transform="rotate(22 310 186)" class="dk sm">Top</text></g>
          <path d="M465 429l26 8v34l-26 12-26-12v-34z" fill="#ddd" stroke="#222" stroke-width="3"/><path d="M439 437l26 9 26-9-26-8z" fill="#fff"/><path d="M465 446v36l25-12v-32z" fill="#aaa"/><path d="M516 450h24l-12 12z" fill="#222"/>
        </svg>

        <div class="side">
          <button aria-label="Appearance"><svg viewBox="0 0 20 20"><circle cx="14" cy="13" r="5" fill="#fff" stroke="#333"/><circle cx="10" cy="6.500" r="5.500" fill="#999" stroke="#333"/><circle cx="6" cy="13" r="5.500" fill="#1651b0" stroke="#17366c"/></svg></button>
          <button aria-label="Configurations"><svg viewBox="0 0 20 20"><use href="#i-cube" x="4" y="3" width="16" height="17"/><use href="#i-grid" width="10" height="8" color="#1651b0"/></svg></button>
          <button aria-label="Custom tables"><svg viewBox="0 0 20 20"><use href="#i-cube" x="5" y="4" width="11" height="13"/><path d="M4 9v4l-1 2 1 1v3h1M16 3h1v4l1 3-1 3v5h-2" fill="none" stroke="#333" stroke-width="1.300"/><use href="#i-grid" width="10" height="8" color="#333"/></svg></button>
          <button aria-label="Variable table" class="vartab"><span>(<i>x</i>)</span><svg viewBox="0 0 10 8"><use href="#i-grid" color="#333"/></svg></button>
        </div>
        <div class="measure">
          <button aria-label="Measure"><svg viewBox="0 0 18 18"><path d="M5 14V8q0-4 5-5 6 0 6 5v6z" fill="#fff" stroke="#333" stroke-width="1.300"/><circle cx="11" cy="8" r="3" fill="#ccc" stroke="#333"/><path d="M1 12h12v3H1zM4 12v2M7 12v2M10 12v2" fill="#fff" stroke="#333"/></svg></button>
          <button aria-label="Mass properties"><svg viewBox="0 0 18 18"><path d="M9 2v13M3 4h12M3 15.500h12M4 4l-2.500 6h5zM14 4l-2.500 6h5z" fill="none" stroke="#333" stroke-width="1.400"/><path d="M1 10h6q-3 3-6 0zM11 10h6q-3 3-6 0z" fill="#333"/></svg></button>
        </div>
      </section>
    </div>

    <nav class="tabs">
      <button class="plus" aria-label="New tab"></button>
      <a class="tab" href="#"><svg><use href="#i-studio"/></svg>Body</a>
      <a class="tab on" href="#"><svg><use href="#i-studio"/></svg>RealParts</a>
      <a class="tab" href="#"><svg><use href="#i-asm"/></svg>Assembly 1</a>
    </nav>
  </div>
</main>
</body>
</html>
```
FILE: styles.css
```css
* { box-sizing: border-box; }
body { margin: 0; height: 100vh; display: flex; flex-direction: column; overflow: hidden; font: 13px/24px Roboto, "Liberation Sans", sans-serif; color: #333; background: #fff; }
button { font: inherit; color: inherit; background: none; border: 0; padding: 0; margin: 0; display: flex; align-items: center; justify-content: center; }
a { color: inherit; text-decoration: none; }
ul { list-style: none; margin: 0; padding: 0; }
svg { flex: none; display: block; }
.defs { position: absolute; width: 0; height: 0; }

.top { height: 40px; flex: none; background: #f7f7f7; display: flex; align-items: center; padding: 0 4px; font-size: 14px; }
.brand { display: flex; align-items: center; gap: 7px; width: 108px; font: 19px/24px Lato, sans-serif; color: #777; }
.brand span { padding-bottom: 2px; }
.burger { width: 16px; height: 16px; flex-direction: column; justify-content: space-between; }
.burger i { width: 16px; height: 3px; background: #222; }
.top h1 { margin: 0 9px 0 11px; font: 700 23px/40px Roboto, sans-serif; width: 110px; white-space: nowrap; }
.branch { font-size: 15px; line-height: 24px; padding-top: 6px; color: #888; width: 71px; }
.globe { width: 20px; height: 20px; }
.stat { gap: 6px; width: 34px; justify-content: flex-start; }
.stat svg { width: 20px; height: 20px; }
.s1 { margin-left: 21px; }
.s2 { margin-left: 13px; }
.s3 { margin-left: 14px; }
.right { margin-left: auto; display: flex; align-items: center; }
.ico { width: 32px; height: 34px; }
.bell { position: relative; width: 36px; }
.bell svg { margin-right: 4px; }
.bell b { position: absolute; right: 4px; top: 3px; width: 15px; height: 16px; background: #1651b0; color: #fff; font-size: 11px; line-height: 16px; border-radius: 2px; }
.btn { height: 34px; border: 1px solid #c8c8c8; border-radius: 4px; background: #fff; margin-right: 8px; }
.w1 { width: 88px; }
.w2 { width: 125px; }
.share { width: 62px; background: #1651b0; border-color: #1651b0; color: #fff; font-weight: 500; }
.help { gap: 4px; margin: 0 10px 0 2px; }
.help b { width: 18px; height: 18px; border-radius: 9px; background: #666; color: #fff; font-size: 15px; line-height: 18px; }
.user { gap: 6px; }
.caret { width: 8px; height: 5px; }

.body { flex: 1; min-height: 0; display: flex; }
.rail { width: 40px; flex: none; background: #fafafa; border-right: 1px solid #d4d4d4; border-top: 1px solid #ddd; display: flex; flex-direction: column; gap: 2px; }
.rail button { height: 33px; }
.rail svg { width: 20px; height: 20px; }
.rail .last { margin-top: auto; }
.main { flex: 1; min-width: 0; display: flex; flex-direction: column; }

.toolbar { height: 36px; flex: none; display: flex; align-items: center; padding-left: 1px; font-size: 14px; }
.tool { width: 34px; height: 34px; flex: none; }
.tool svg, .sk svg { width: 20px; height: 20px; }
.tool.gear svg { width: 24px; height: 24px; }
.fx { font: bold 18px/20px "Liberation Serif", serif; }
.more { width: 18px; height: 34px; flex: none; }
.more svg { width: 10px; height: 10px; }
.sep { width: 2px; height: 26px; margin: 0 1px; background: #ddd; flex: none; }
.sk { width: 85px; gap: 4px; padding-right: 4px; flex: none; }
.search { width: 146px; height: 30px; margin-left: 11px; padding: 0 10px; background: #eee; border-radius: 4px; display: flex; align-items: center; gap: 1px; }
.search input { flex: 1; min-width: 0; border: 0; padding: 0; background: none; font: inherit; color: #444; }
.search kbd { flex: none; border: 1px solid #bbb; border-bottom-width: 2px; border-radius: 2px; font: 11px/15px Roboto, sans-serif; padding: 0 3px; }
.search kbd:last-child { padding: 0 4px; }
input::placeholder { color: #555; opacity: 1; }

.work { flex: 1; min-height: 0; display: flex; }
.panel { width: 206px; flex: none; border: solid #c8c8c8; border-width: 1px 1px 0 0; display: flex; flex-direction: column; padding-right: 5px; }
.phead { display: flex; align-items: center; height: 32px; padding-left: 4px; gap: 10px; }
.phead h2 { flex: 1; margin: 0; font-size: 13px; font-weight: 500; white-space: nowrap; }
.phead button:last-child { margin-right: 15px; }
.phead svg { width: 20px; height: 20px; }
.filter { display: flex; align-items: center; gap: 13px; padding: 0 3px 0 10px; height: 30px; }
.filter input { flex: 1; min-width: 0; height: 30px; border: 1px solid #c4c4c4; border-radius: 3px; padding: 0 5px; font: italic 13px Roboto, sans-serif; }
.filter input::placeholder { color: #888; }
.listwrap { height: 567px; display: flex; border-bottom: 1px solid #c8c8c8; overflow: hidden; }
.list { flex: 1; display: flex; flex-direction: column; gap: 2px; padding-top: 1px; }
.list ul { display: flex; flex-direction: column; gap: 2px; }
.list li { display: flex; align-items: center; height: 24px; flex: none; padding: 2px 0 0 6px; gap: 5px; border-bottom: 1px solid transparent; color: #333; }
.list li svg { width: 16px; height: 16px; }
.list li.head { gap: 8px; padding-left: 5px; }
.list li.head .c { width: 10px; height: 14px; }
.list li.sel { background: #eaeff3; border-color: #82c8f0; }
.list li.off { color: #999; }
.list li.off svg { opacity: .4; }
.list li.group { display: block; height: auto; padding: 0; border: 0; position: relative; }
.list li.group::before { content: ""; position: absolute; left: 10px; top: -1px; bottom: 0; border-left: 1px solid #bbb; }
.list li.group::after { content: ""; position: absolute; left: 5px; bottom: 0; width: 10px; border-bottom: 1px solid #bbb; }
.list li.kid { padding-left: 26px; gap: 4px; }
.parts { flex: none; }
.parts .group li { padding-left: 23px; }
.scroll { width: 17px; background: #f1f1f1; display: flex; flex-direction: column; align-items: center; padding: 6px 0 6px; }
.scroll svg { width: 8px; height: 5px; }
.scroll i { width: 13px; height: 386px; background: #c1c1c1; margin-top: 6px; }
.scroll .dn { margin-top: auto; }

.canvas { flex: 1; min-width: 0; position: relative; }
.scene { width: 100%; height: 100%; }
.toggle { position: absolute; left: -1px; top: 454px; width: 33px; height: 34px; background: #fff; border: 1px solid #c8c8c8; border-left: 0; }
.viewcube { position: absolute; right: 0; top: 4px; width: 200px; height: 170px; }
.vt { font: 36px Roboto, sans-serif; }
.vt .dk { fill: #222; }
.vt .sm { font-size: 24px; }
.side { position: absolute; right: 0; top: 403px; width: 32px; border: 1px solid #c8c8c8; border-right: 0; background: #fff; }
.side button { width: 31px; height: 33px; position: relative; }
.side button + button { border-top: 1px solid #c8c8c8; }
.side svg { width: 20px; height: 20px; }
.side .vartab { font: bold 18px/20px "Liberation Serif", serif; }
.side .vartab svg { position: absolute; left: 6px; top: 6px; width: 10px; height: 8px; }
.measure { position: absolute; right: 11px; bottom: 5px; display: flex; gap: 17px; }
.measure svg { width: 18px; height: 18px; }

.tabs { height: 31px; flex: none; background: #cfcfcf; display: flex; align-items: flex-start; gap: 3px; padding-top: 1px; font-size: 14px; color: #666; }
.plus { width: 37px; height: 28px; position: relative; }
.plus::before, .plus::after { content: ""; position: absolute; background: #666; left: 9px; top: 13px; width: 15px; height: 3px; }
.plus::after { left: 15px; top: 7px; width: 3px; height: 15px; }
.tab { width: 199px; height: 28px; background: #e8e8e8; border-radius: 0 0 5px 5px; display: flex; align-items: center; gap: 3px; padding: 0 0 2px 10px; box-shadow: 1px 1px 1px #aaa; }
.tab svg { width: 19px; height: 18px; }
.tab.on { background: #fff; color: #333; border-bottom: 2px solid #1651b0; padding-bottom: 0; }
```
